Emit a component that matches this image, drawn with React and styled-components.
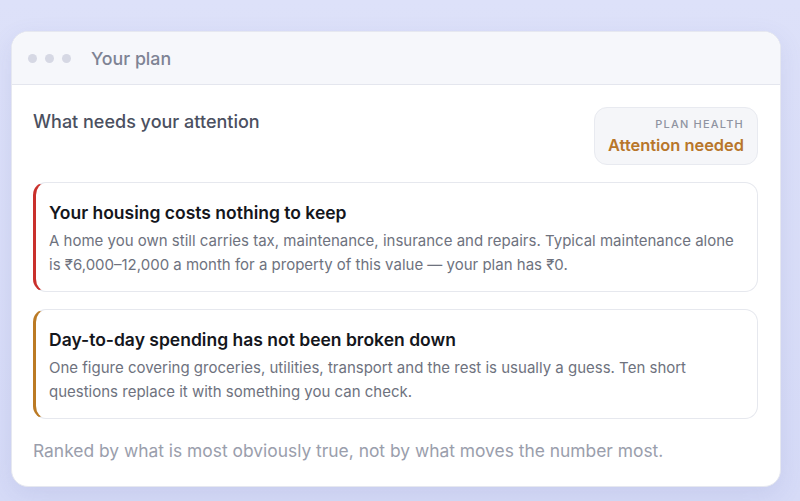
import React from "react";
import styled, { createGlobalStyle } from "styled-components";

const GlobalStyle = createGlobalStyle`
  html, body {
    margin: 0;
    padding: 0;
    background: #dde1f8;
    font-family: Inter, "Noto Sans", sans-serif;
  }
`;

const Page = styled.div`
  width: 800px;
  height: 501px;
  box-sizing: border-box;
  padding: 31px 19px 0 11px;
  background: linear-gradient(180deg, #dde1f9 0%, #d6dbf7 100%);
`;

const Window = styled.div`
  width: 770px;
  height: 456px;
  box-sizing: border-box;
  background: #ffffff;
  border: 1px solid #e6e8f0;
  border-radius: 17px;
  overflow: hidden;
  box-shadow: 0 8px 24px rgba(90, 100, 170, 0.12);
  display: flex;
  flex-direction: column;
`;

const TitleBar = styled.div`
  height: 52px;
  flex-shrink: 0;
  display: flex;
  align-items: center;
  padding-left: 16px;
  background: #f6f7fb;
  border-bottom: 1px solid #e4e6ee;
`;

const Dots = styled.div`
  display: flex;
  gap: 8px;
  margin-right: 20px;
`;

const Dot = styled.span`
  width: 9px;
  height: 9px;
  border-radius: 50%;
  background: #d6d8e4;
`;

const WindowTitle = styled.div`
  font-size: 17.8px;
  font-weight: 500;
  color: #7e8394;
`;

const Body = styled.div`
  padding: 22px 22px 0 21px;
  display: flex;
  flex-direction: column;
`;

const HeaderRow = styled.div`
  display: flex;
  justify-content: space-between;
  align-items: flex-start;
  margin-bottom: 17px;
`;

const Heading = styled.h2`
  margin: 4px 0 0;
  font-size: 18px;
  font-weight: 500;
  color: #4b5060;
`;

const Health = styled.div`
  box-sizing: border-box;
  height: 58px;
  padding: 9px 13px 0 13px;
  background: #f5f6f9;
  border: 1px solid #e8eaf0;
  border-radius: 13px;
  text-align: right;
`;

const HealthLabel = styled.div`
  font-size: 11px;
  font-weight: 500;
  letter-spacing: 1.2px;
  color: #8f93a1;
`;

const HealthValue = styled.div`
  margin-top: 4px;
  font-size: 16.4px;
  font-weight: 600;
  color: #b8762b;
`;

const Cards = styled.div`
  display: flex;
  flex-direction: column;
  gap: 17px;
`;

const Card = styled.div`
  box-sizing: border-box;
  height: 110px;
  padding: 19px 20px 0 13px;
  background: #ffffff;
  border: 1px solid #e6e8ee;
  border-left: 3px solid ${(p) => p.$accent};
  border-radius: 13px;
`;

const CardTitle = styled.div`
  font-size: 17.5px;
  font-weight: 600;
  color: #14161c;
  margin-bottom: 6px;
`;

const CardText = styled.p`
  margin: 0;
  font-size: 15px;
  line-height: 23.5px;
  color: #6e727e;
`;

const Footnote = styled.p`
  margin: 21px 0 0;
  font-size: 17.4px;
  color: #9a9eac;
`;

const issues = [
  {
    accent: "#c9302c",
    title: "Your housing costs nothing to keep",
    text: "A home you own still carries tax, maintenance, insurance and repairs. Typical maintenance alone is ₹6,000–12,000 a month for a property of this value — your plan has ₹0.",
  },
  {
    accent: "#bb7a24",
    title: "Day-to-day spending has not been broken down",
    text: "One figure covering groceries, utilities, transport and the rest is usually a guess. Ten short questions replace it with something you can check.",
  },
];

export default function App() {
  return (
    <>
      <GlobalStyle />
      <Page>
        <Window>
          <TitleBar>
            <Dots>
              <Dot />
              <Dot />
              <Dot />
            </Dots>
            <WindowTitle>Your plan</WindowTitle>
          </TitleBar>
          <Body>
            <HeaderRow>
              <Heading>What needs your attention</Heading>
              <Health>
                <HealthLabel>PLAN HEALTH</HealthLabel>
                <HealthValue>Attention needed</HealthValue>
              </Health>
            </HeaderRow>
            <Cards>
              {issues.map((i) => (
                <Card key={i.title} $accent={i.accent}>
                  <CardTitle>{i.title}</CardTitle>
                  <CardText>{i.text}</CardText>
                </Card>
              ))}
            </Cards>
            <Footnote>
              Ranked by what is most obviously true, not by what moves the number most.
            </Footnote>
          </Body>
        </Window>
      </Page>
    </>
  );
}
